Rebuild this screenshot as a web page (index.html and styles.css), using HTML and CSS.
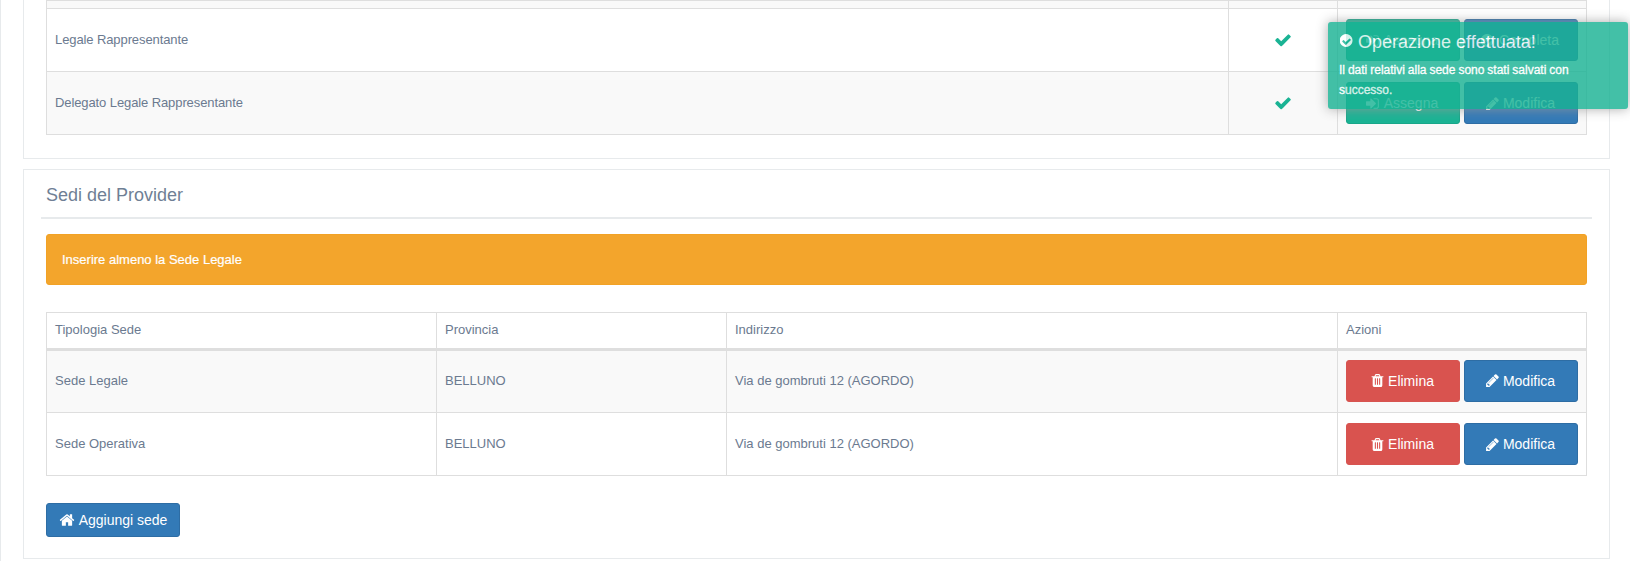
FILE: index.html
```html
<!DOCTYPE html>
<html lang="it">
<head>
<meta charset="utf-8">
<title>Sedi del Provider</title>
<link rel="stylesheet" href="styles.css">
</head>
<body>
<svg class="defs" width="0" height="0">
  <symbol id="i-check" viewBox="0 0 1792 1792"><path d="M1671 566q0 40-28 68l-724 724-136 136q-28 28-68 28t-68-28l-136-136-362-362q-28-28-28-68t28-68l136-136q28-28 68-28t68 28l294 295 656-657q28-28 68-28t68 28l136 136q28 28 28 68z"/></symbol>
  <symbol id="i-circle" viewBox="0 0 1792 1792"><path d="M1299 813q0-28-18-46l-91-90q-19-19-45-19t-45 19l-408 407-226-226q-19-19-45-19t-45 19l-91 90q-18 18-18 46 0 27 18 45l362 362q19 19 45 19 27 0 46-19l543-543q18-18 18-45zm197 83q0 209-103 385.5t-279.5 279.5-385.5 103-385.5-103-279.5-279.5-103-385.5 103-385.5 279.5-279.5 385.5-103 385.5 103 279.5 279.5 103 385.5z"/></symbol>
  <symbol id="i-trash" viewBox="0 0 1792 1792"><path d="M704 1376v-704q0-14-9-23t-23-9h-64q-14 0-23 9t-9 23v704q0 14 9 23t23 9h64q14 0 23-9t9-23zm256 0v-704q0-14-9-23t-23-9h-64q-14 0-23 9t-9 23v704q0 14 9 23t23 9h64q14 0 23-9t9-23zm256 0v-704q0-14-9-23t-23-9h-64q-14 0-23 9t-9 23v704q0 14 9 23t23 9h64q14 0 23-9t9-23zm-544-992h448l-48-117q-7-9-17-11h-317q-10 2-17 11zm928 32v64q0 14-9 23t-23 9h-96v948q0 83-47 143.5t-113 60.5h-832q-66 0-113-58.5t-47-141.5v-952h-96q-14 0-23-9t-9-23v-64q0-14 9-23t23-9h309l70-167q15-37 54-63t79-26h320q40 0 79 26t54 63l70 167h309q14 0 23 9t9 23z"/></symbol>
  <symbol id="i-pencil" viewBox="0 0 1792 1792"><path d="M491 1536l91-91-235-235-91 91v107h128v128h107zm523-928q0-22-22-22-10 0-17 7l-542 542q-7 7-7 17 0 22 22 22 10 0 17-7l542-542q7-7 7-17zm-54-192l416 416-832 832h-416v-416zm683 96q0 53-37 90l-166 166-416-416 166-165q36-38 90-38 53 0 91 38l235 234q37 39 37 91z"/></symbol>
  <symbol id="i-home" viewBox="0 0 1792 1792"><path d="M1472 992v480q0 26-19 45t-45 19h-384v-384h-256v384h-384q-26 0-45-19t-19-45v-480q0-1 .5-3t.5-3l575-474 575 474q1 2 1 6zm223-69l-62 74q-8 9-21 11h-3q-13 0-21-7l-692-577-692 577q-12 8-24 7-13-2-21-11l-62-74q-8-10-7-23.5t11-21.5l719-599q32-26 76-26t76 26l244 204v-195q0-14 9-23t23-9h192q14 0 23 9t9 23v408l219 182q10 8 11 21.5t-7 23.5z"/></symbol>
  <symbol id="i-signin" viewBox="0 0 1792 1792"><path d="M1184 896q0 26-19 45l-544 544q-19 19-45 19t-45-19-19-45v-288h-448q-26 0-45-19t-19-45v-384q0-26 19-45t45-19h448v-288q0-26 19-45t45-19 45 19l544 544q19 19 19 45zm352-352v704q0 119-84.5 203.5t-203.5 84.5h-320q-13 0-22.5-9.5t-9.5-22.5q0-4-1-20t-.5-26.5 3-23.5 10-19.5 20.5-6.5h320q66 0 113-47t47-113v-704q0-66-47-113t-113-47h-312l-11.5-1-11.5-3-8-5.5-7-9-2-13.5q0-4-1-20t-.5-26.5 3-23.5 10-19.5 20.5-6.5h320q119 0 203.5 84.5t84.5 203.5z"/></symbol>
</svg>

<main class="page">
  <section class="panel panel-roles">
    <table class="grid roles">
      <colgroup><col><col class="c-flag"><col class="c-actions"></colgroup>
      <tr class="stub"><td></td><td></td><td></td></tr>
      <tr>
        <td class="txt">Legale Rappresentante</td>
        <td class="flag"><svg class="ico ico-check"><use href="#i-check"/></svg></td>
        <td class="actions"><div class="btns">
          <a class="btn btn-green"><svg class="ico"><use href="#i-signin"/></svg>Assegna</a>
          <a class="btn btn-blue"><svg class="ico"><use href="#i-circle"/></svg>Completa</a>
        </div></td>
      </tr>
      <tr class="alt">
        <td class="txt">Delegato Legale Rappresentante</td>
        <td class="flag"><svg class="ico ico-check"><use href="#i-check"/></svg></td>
        <td class="actions"><div class="btns">
          <a class="btn btn-green"><svg class="ico"><use href="#i-signin"/></svg>Assegna</a>
          <a class="btn btn-blue"><svg class="ico"><use href="#i-pencil"/></svg>Modifica</a>
        </div></td>
      </tr>
    </table>
  </section>

  <section class="panel panel-sedi">
    <h3 class="panel-title">Sedi del Provider</h3>
    <div class="rule"></div>
    <div class="alert">Inserire almeno la Sede Legale</div>
    <table class="grid sedi">
      <colgroup><col class="c-tipo"><col class="c-prov"><col><col class="c-actions"></colgroup>
      <thead>
        <tr><th>Tipologia Sede</th><th>Provincia</th><th>Indirizzo</th><th>Azioni</th></tr>
      </thead>
      <tbody>
        <tr class="alt">
          <td class="txt">Sede Legale</td><td class="txt">BELLUNO</td><td class="txt">Via de gombruti 12 (AGORDO)</td>
          <td class="txt"><div class="btns">
            <a class="btn btn-red"><svg class="ico"><use href="#i-trash"/></svg>Elimina</a>
            <a class="btn btn-blue"><svg class="ico"><use href="#i-pencil"/></svg>Modifica</a>
          </div></td>
        </tr>
        <tr>
          <td class="txt">Sede Operativa</td><td class="txt">BELLUNO</td><td class="txt">Via de gombruti 12 (AGORDO)</td>
          <td class="actions"><div class="btns">
            <a class="btn btn-red"><svg class="ico"><use href="#i-trash"/></svg>Elimina</a>
            <a class="btn btn-blue"><svg class="ico"><use href="#i-pencil"/></svg>Modifica</a>
          </div></td>
        </tr>
      </tbody>
    </table>
    <a class="btn btn-blue btn-add"><svg class="ico ico-home"><use href="#i-home"/></svg>Aggiungi sede</a>
  </section>
</main>

<aside class="toast">
  <h4 class="toast-title"><svg class="ico ico-toast"><use href="#i-circle"/></svg>Operazione effettuata!</h4>
  <p class="toast-text">Il dati relativi alla sede sono stati salvati con successo.</p>
</aside>
</body>
</html>
```
FILE: styles.css
```css
* { box-sizing: border-box; }
html, body { margin: 0; height: 561px; overflow: hidden; }
body {
  background: #fff;
  font-family: "Liberation Sans", Arial, sans-serif;
  font-size: 13px;
  color: #676a6c;
  position: relative;
}
.defs { position: absolute; }
.page {
  border-left: 1px solid #e7eaec;
  padding: 0 20px 0 22px;
  height: 561px;
  display: flex;
  flex-direction: column;
  gap: 10px;
}
.panel {
  border: 1px solid #e7eaec;
  border-top: 0;
  background: #fff;
  padding: 0 22px;
  flex: none;
}
.panel-roles { height: 159px; }
.panel-sedi {
  border-top: 1px solid #e7eaec;
  height: 390px;
}
.panel-title {
  margin: 0;
  height: 47px;
  padding-top: 15px;
  font-size: 18px;
  line-height: 20px;
  font-weight: 400;
  color: #6f7f95;
}
.rule {
  height: 2px;
  background: #e7eaec;
  margin: 0 -5px;
}
.alert {
  margin-top: 15px;
  height: 51px;
  background: #f3a52c;
  border: 1px solid #f2a225;
  border-radius: 3px;
  color: #fff;
  padding-left: 15px;
  font-size: 13px;
  line-height: 49px;
  -webkit-text-stroke: .2px #fff;
}
.grid {
  width: 100%;
  border-collapse: collapse;
  table-layout: fixed;
  color: #6b7a90;
}
.grid td, .grid th {
  border: 1px solid #dedede;
  padding: 0 8px;
  font-weight: 400;
  text-align: left;
}
.grid .alt td { background: #f9f9f9; }
.c-flag { width: 109px; }
.c-actions { width: 249px; }
.c-tipo { width: 390px; }
.c-prov { width: 290px; }
.roles { letter-spacing: -.1px; }
.roles tr { height: 63px; }
.roles .stub { height: 8px; }
.roles .stub td { background: #f9f9f9; }
.grid .txt { padding-bottom: 2px; }
.flag { text-align: center !important; }
.sedi { margin-top: 27px; }
.sedi thead tr { height: 37px; }
.grid.sedi th { border-bottom-width: 3px; padding-bottom: 2px; }
.sedi tbody tr { height: 63px; }
.btns { display: flex; gap: 4px; }
.btn {
  display: inline-flex;
  align-items: center;
  justify-content: center;
  gap: 3px;
  height: 42px;
  width: 114px;
  padding-right: 2px;
  border-radius: 3px;
  border: 1px solid transparent;
  color: #fff;
  font-size: 14px;
  letter-spacing: 0;
  white-space: nowrap;
}
.btn-green { background: #1ab394; border-color: #18a689; }
.btn-blue { background: #337ab7; border-color: #2e6da4; }
.btn-red { background: #d9534f; border-color: #d75450; }
.btn-add {
  margin-top: 27px;
  width: 134px;
  height: 34px;
  gap: 4px;
  padding-right: 0;
}
.ico { width: 15px; height: 15px; fill: currentColor; flex: none; }
.ico-check { width: 18px; height: 18px; fill: #1ab394; vertical-align: middle; }
.ico-home { width: 16px; height: 16px; }
.toast {
  position: absolute;
  left: 1328px;
  top: 22px;
  width: 300px;
  height: 87px;
  padding: 9px 11px;
  border-radius: 3px;
  background: #1ab394;
  opacity: .82;
  color: #fff;
  box-shadow: 0 0 12px #999;
}
.toast-title {
  margin: 0;
  padding-left: 1px;
  display: flex;
  align-items: center;
  gap: 3px;
  font-size: 18px;
  line-height: 22px;
  font-weight: 400;
}
.ico-toast { width: 15px; height: 15px; margin-bottom: 3px; }
.toast-text {
  margin: 7px 0 0;
  font-size: 12px;
  line-height: 20px;
  word-spacing: -.4px;
  -webkit-text-stroke: .3px #fff;
}
```
